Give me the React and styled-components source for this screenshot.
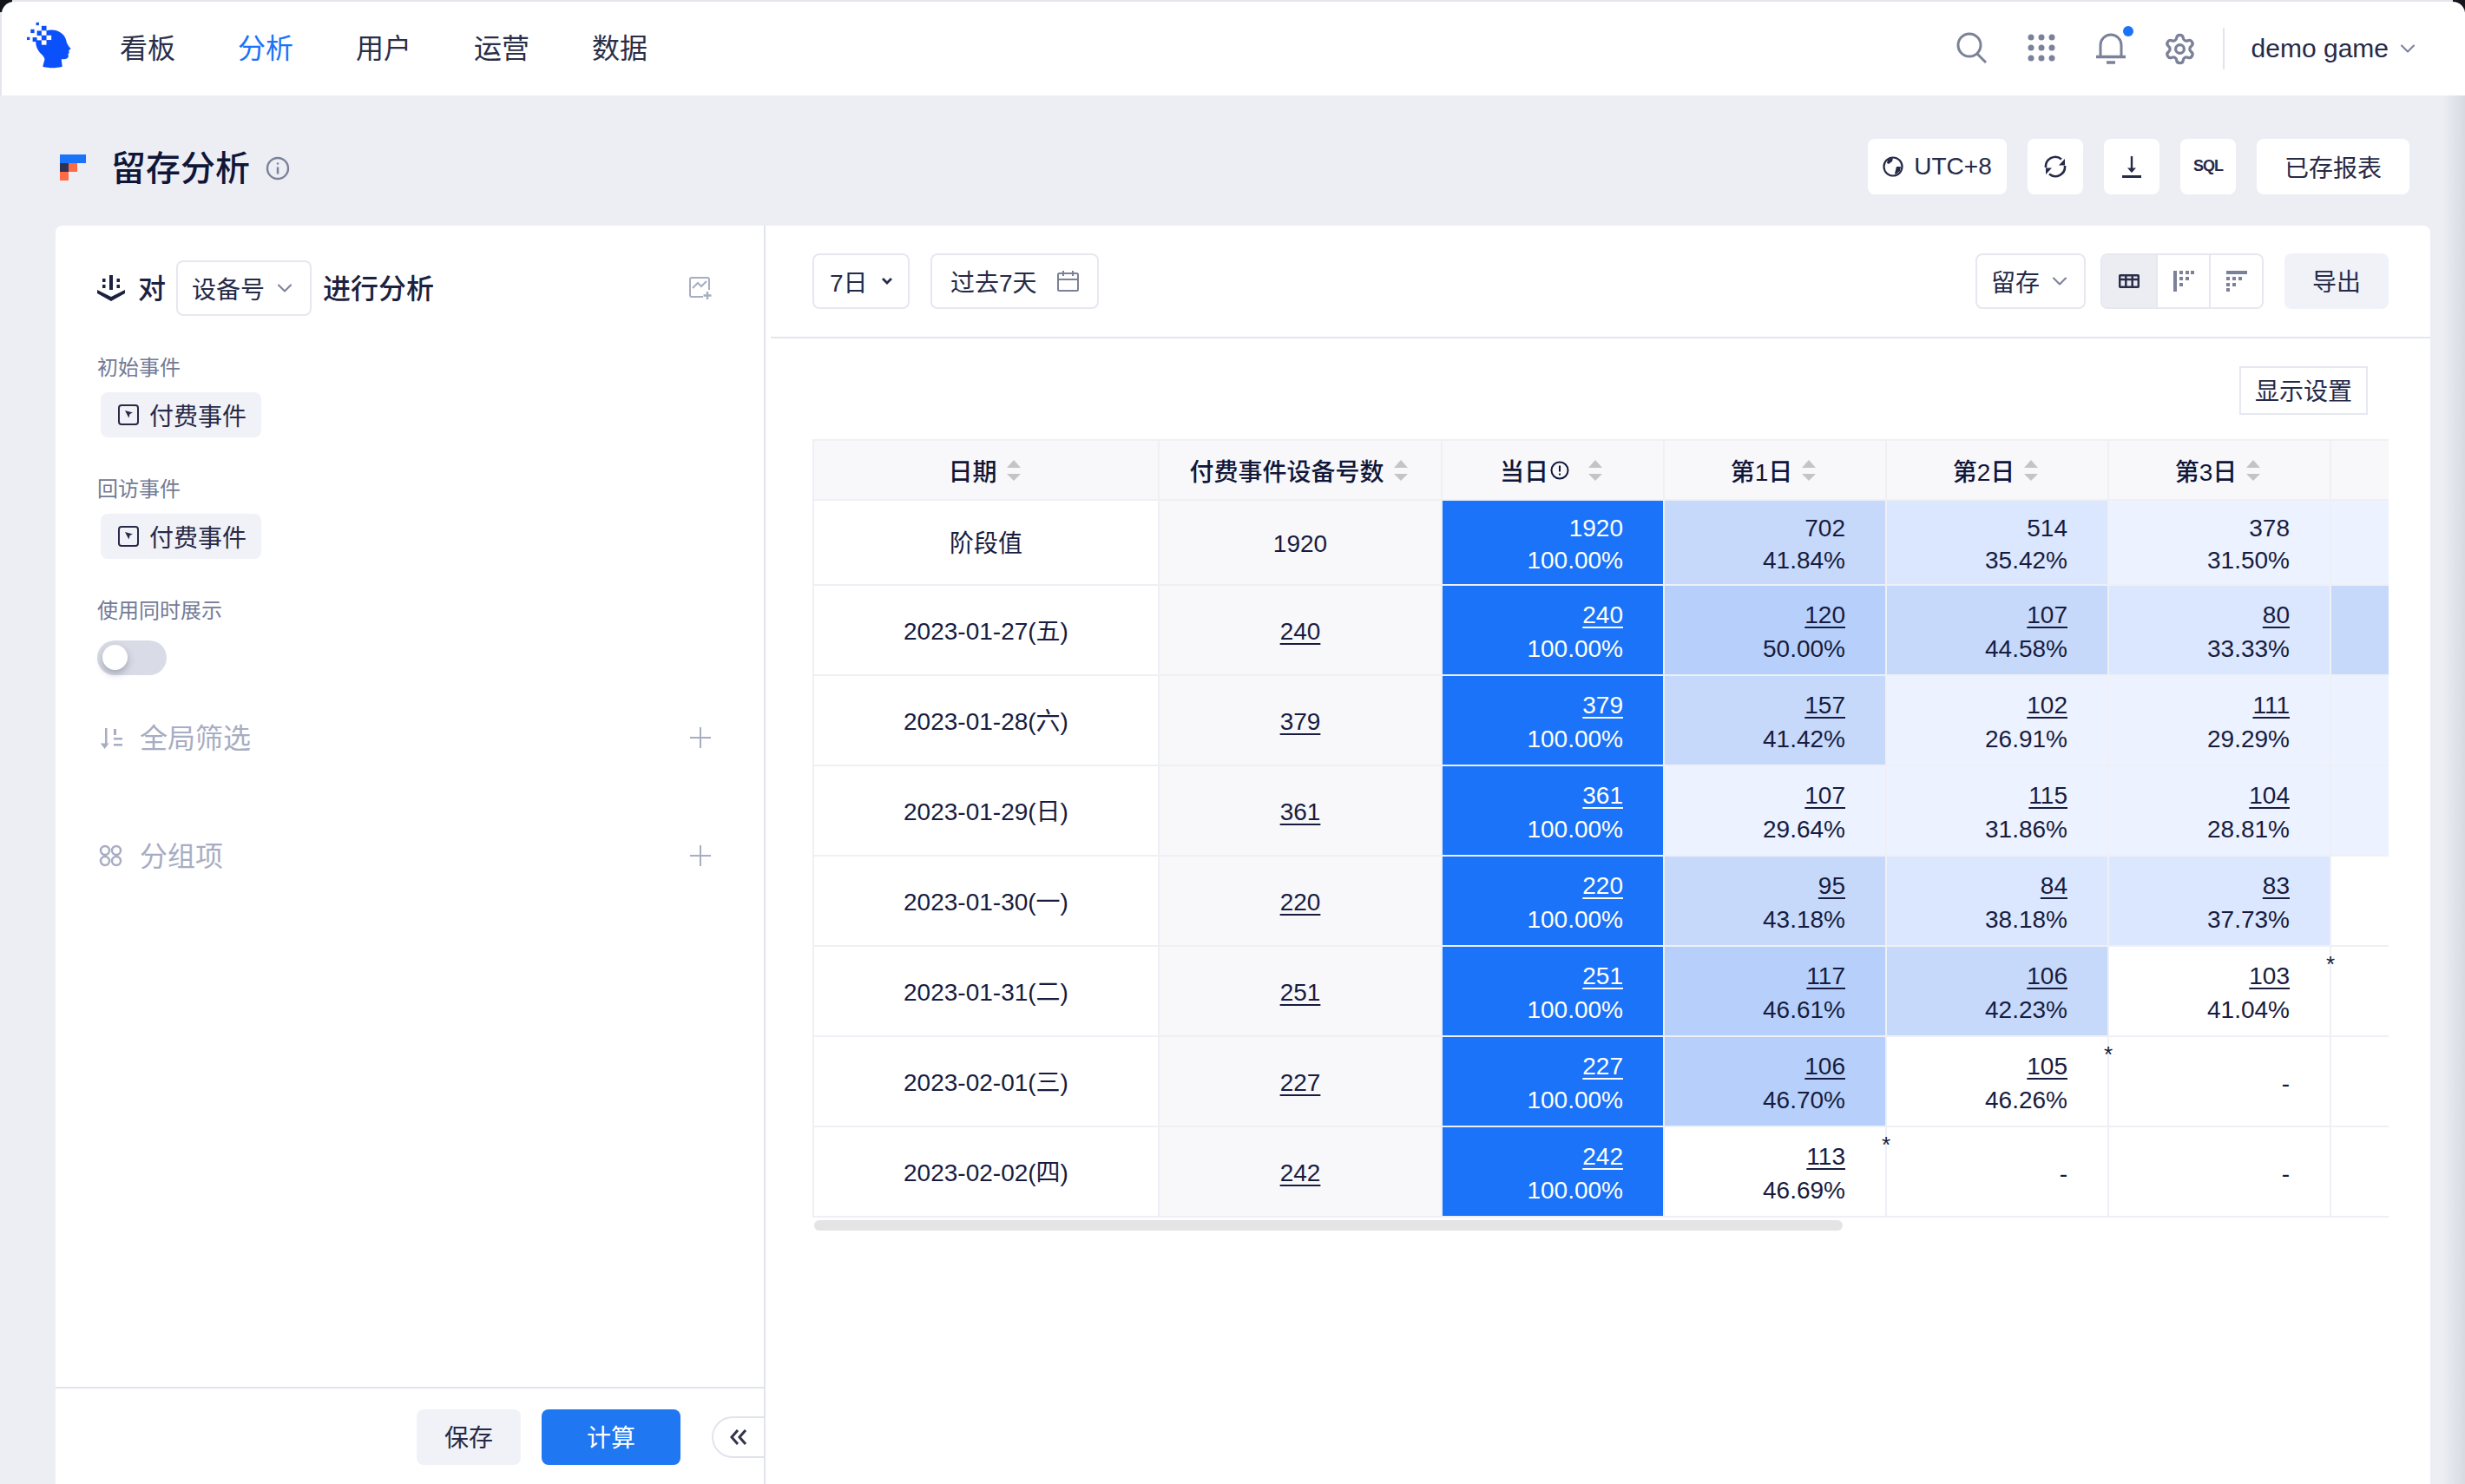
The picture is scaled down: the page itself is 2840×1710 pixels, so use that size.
import React from "react";
import styled, { createGlobalStyle } from "styled-components";
import { ChevronDown, Settings } from "lucide-react";

const HEAT = ["#ffffff", "#ecf2ff", "#dbe7fe", "#c6d9fb", "#b6d0fb"];

const summary = { date: "阶段值", total: "1920", first: ["1920", "100.00%"], cells: [["702", "41.84%", 3], ["514", "35.42%", 2], ["378", "31.50%", 1]], tail: 1 };

const rows = [
  { date: "2023-01-27(五)", total: "240", cells: [["120", "50.00%", 4], ["107", "44.58%", 3], ["80", "33.33%", 2]], tail: 3 },
  { date: "2023-01-28(六)", total: "379", cells: [["157", "41.42%", 3], ["102", "26.91%", 1], ["111", "29.29%", 1]], tail: 1 },
  { date: "2023-01-29(日)", total: "361", cells: [["107", "29.64%", 1], ["115", "31.86%", 1], ["104", "28.81%", 1]], tail: 1 },
  { date: "2023-01-30(一)", total: "220", cells: [["95", "43.18%", 3], ["84", "38.18%", 2], ["83", "37.73%", 2]], tail: 0 },
  { date: "2023-01-31(二)", total: "251", cells: [["117", "46.61%", 4], ["106", "42.23%", 3], ["103", "41.04%", 0, true]], tail: 0 },
  { date: "2023-02-01(三)", total: "227", cells: [["106", "46.70%", 4], ["105", "46.26%", 0, true], null], tail: 0 },
  { date: "2023-02-02(四)", total: "242", cells: [["113", "46.69%", 0, true], null, null], tail: 0 },
];

const GlobalStyle = createGlobalStyle`
  * { box-sizing: border-box; }
  html, body { margin: 0; padding: 0; }
  body {
    background: #eceef4;
    color: #171c3f;
    font-family: "Liberation Sans", "Noto Sans CJK SC", sans-serif;
    font-size: 28px;
  }
`;

const Page = styled.div`
  position: relative;
  width: 2840px;
  height: 1710px;
  overflow: hidden;
  background: #eceef4;

  &::after {
    content: "";
    position: absolute;
    top: 76px;
    right: 0;
    bottom: 0;
    width: 26px;
    background: linear-gradient(to right, rgba(20, 22, 40, 0), rgba(20, 22, 40, 0.09));
    -webkit-mask-image: linear-gradient(to bottom, transparent, black 34px);
    mask-image: linear-gradient(to bottom, transparent, black 34px);
    pointer-events: none;
  }
`;

const TopFrame = styled.div`
  position: relative;
  height: 110px;
  padding: 2px 0 0 2px;
  background: #e3e6eb;

  &::before, &::after {
    content: "";
    position: absolute;
    top: 0;
    width: 14px;
    height: 14px;
    background: #14141c;
  }
  &::before { left: 0; }
  &::after { right: 0; }
`;

const Header = styled.header`
  position: relative;
  z-index: 1;
  display: flex;
  align-items: center;
  height: 108px;
  padding: 0 52px 0 28px;
  background: #fff;
  border-radius: 14px 14px 0 0;
`;

const Logo = styled.svg`
  width: 53px;
  height: 55px;
  margin-top: -8px;
  flex: none;
`;

const Nav = styled.nav`
  display: flex;
  gap: 72px;
  margin-left: 55px;
`;

const NavItem = styled.a`
  font-size: 32px;
  line-height: 44px;
  color: ${(p) => (p.$active ? "#1a73f8" : "#2b2e48")};
`;

const HeaderRight = styled.div`
  display: flex;
  align-items: center;
  gap: 36px;
  margin-left: auto;
`;

const IconSlot = styled.div`
  display: flex;
  align-items: center;
  justify-content: center;
  width: 44px;
  height: 44px;
  color: #7b8198;

  svg { overflow: visible; }
`;

const VDivider = styled.div`
  width: 2px;
  height: 48px;
  margin-left: -9px;
  background: #e2e4ec;
`;

const GameSwitch = styled.div`
  display: flex;
  align-items: center;
  gap: 8px;
  margin-left: -5px;
  font-size: 30px;
  color: #262a47;
`;

const TitleRow = styled.div`
  display: flex;
  align-items: center;
  height: 150px;
  padding: 50px 64px 36px 69px;
`;

const PageIcon = styled.svg`
  width: 30px;
  height: 30px;
  margin-top: 2px;
  flex: none;
`;

const Title = styled.h1`
  margin: 4px 0 0 29px;
  font-size: 40px;
  line-height: 56px;
  font-weight: 500;
  color: #111638;
`;

const InfoIcon = styled.svg`
  width: 28px;
  height: 28px;
  margin: 4px 0 0 18px;
  flex: none;
`;

const TitleActions = styled.div`
  display: flex;
  gap: 24px;
  margin-left: auto;
`;

const ActionButton = styled.button`
  display: flex;
  align-items: center;
  justify-content: center;
  gap: 12px;
  width: ${(p) => p.$width || 64}px;
  height: 64px;
  padding: 0 0 1px;
  border: 0;
  border-radius: 8px;
  background: #fff;
  color: #262a47;
  font: inherit;
  font-size: 28px;
`;

const SqlMark = styled.span`
  font-size: 18px;
  font-weight: 700;
  letter-spacing: -1px;
`;

const MainPanel = styled.main`
  display: flex;
  width: 2736px;
  height: 1450px;
  margin-left: 64px;
  background: #fff;
  border-radius: 8px 8px 0 0;
`;

const LeftPane = styled.aside`
  display: flex;
  flex-direction: column;
  width: 818px;
  flex: none;
  border-right: 2px solid #e2e4ec;
`;

const LeftBody = styled.div`
  flex: 1;
  padding: 40px 60px 0 48px;
`;

const AnalysisRow = styled.div`
  display: flex;
  align-items: center;
  height: 64px;
  font-size: 32px;
  font-weight: 500;
  color: #1d2140;
`;

const Subject = styled.span`
  margin: -4px ${(p) => p.$right}px 0 ${(p) => p.$left}px;
`;

const SelectBox = styled.div`
  display: flex;
  align-items: center;
  justify-content: space-between;
  width: ${(p) => p.$width}px;
  height: 64px;
  padding: 0 ${(p) => p.$padRight || 12}px 0 ${(p) => p.$padLeft || 16}px;
  border: 2px solid #e6e8f0;
  border-radius: 8px;
  background: #fff;
  font-size: 28px;
  font-weight: 400;
  color: #262a47;
  flex: none;

  svg { flex: none; }
`;

const AddChart = styled.svg`
  width: 26px;
  height: 28px;
  margin-left: auto;
`;

const FieldLabel = styled.div`
  margin-top: 44px;
  font-size: 24px;
  line-height: 32px;
  color: #737a95;
`;

const EventTag = styled.div`
  display: flex;
  align-items: center;
  gap: 12px;
  width: 185px;
  height: 52px;
  margin: 12px 0 0 4px;
  padding: 0 0 1px 20px;
  border-radius: 8px;
  background: #f1f2f8;
  font-size: 28px;
  color: #262a47;
`;

const Toggle = styled.div`
  position: relative;
  width: 80px;
  height: 40px;
  margin-top: 18px;
  border-radius: 20px;
  background: #d9dce6;

  &::after {
    content: "";
    position: absolute;
    top: 5px;
    left: 6px;
    width: 29px;
    height: 29px;
    border-radius: 50%;
    background: #fff;
    box-shadow: 0 4px 8px rgba(30, 35, 60, 0.3);
  }
`;

const SectionRow = styled.div`
  display: flex;
  align-items: center;
  gap: 18px;
  height: 48px;
  margin-top: ${(p) => p.$top}px;
  font-size: 32px;
  color: #a7adc2;
`;

const SectionText = styled.span`
  margin-top: -4px;
`;

const SectionAdd = styled.svg`
  width: 26px;
  height: 26px;
  margin-left: auto;
`;

const LeftFooter = styled.div`
  position: relative;
  display: flex;
  justify-content: flex-end;
  gap: 24px;
  height: 112px;
  padding: 24px 96px 0 0;
  border-top: 2px solid #e2e4ec;
`;

const FooterButton = styled.button`
  width: ${(p) => p.$width}px;
  height: 64px;
  padding: 0 0 2px;
  border: 0;
  border-radius: 8px;
  background: ${(p) => (p.$primary ? "#2077f2" : "#f1f2f8")};
  color: ${(p) => (p.$primary ? "#fff" : "#262a47")};
  font: inherit;
  font-size: 28px;
`;

const CollapseTab = styled.div`
  position: absolute;
  top: 32px;
  right: 0;
  display: flex;
  align-items: center;
  justify-content: center;
  width: 60px;
  height: 48px;
  border: 2px solid #e2e4ec;
  border-right: 0;
  border-radius: 24px 0 0 24px;
  background: #fff;
`;

const RightPane = styled.section`
  flex: 1;
  min-width: 0;
`;

const Toolbar = styled.div`
  display: flex;
  align-items: flex-start;
  gap: 24px;
  height: 130px;
  margin-left: 6px;
  padding: 32px 48px 0 48px;
  border-bottom: 2px solid #e4e6ee;
`;

const RangeText = styled.span`
  white-space: nowrap;
`;

const ToolbarSpacer = styled.div`
  flex: 1;
`;

const Segments = styled.div`
  display: flex;
  height: 64px;
  margin-left: -7px;
  border: 2px solid #e6e8f0;
  border-radius: 8px;
  overflow: hidden;
`;

const Segment = styled.div`
  display: flex;
  align-items: center;
  justify-content: center;
  width: ${(p) => (p.$active ? 62 : 61)}px;
  background: ${(p) => (p.$active ? "#ecedf3" : "#fff")};

  & + & { border-left: 2px solid #e6e8f0; }
`;

const ExportButton = styled.button`
  width: 120px;
  height: 64px;
  padding: 0 0 2px;
  border: 0;
  border-radius: 8px;
  background: #f1f2f7;
  color: #262a47;
  font: inherit;
  font-size: 28px;
`;

const SettingsRow = styled.div`
  display: flex;
  justify-content: flex-end;
  margin: 32px 72px 0 0;
`;

const OutlineButton = styled.button`
  width: 148px;
  height: 56px;
  padding: 0 0 2px;
  border: 2px solid #e6e8f0;
  background: #fff;
  color: #262a47;
  font: inherit;
  font-size: 28px;
`;

const TableWrap = styled.div`
  width: 1816px;
  margin: 28px 0 0 54px;
  overflow: hidden;
`;

const Table = styled.table`
  width: 1993px;
  table-layout: fixed;
  border-collapse: separate;
  border-spacing: 0;
  border-left: 2px solid #eef0f5;
`;

const Th = styled.th`
  height: 71px;
  padding: 0 4px 0 0;
  border-top: 2px solid #eef0f5;
  border-right: 2px solid #eef0f5;
  border-bottom: 2px solid #eef0f5;
  background: #f8f8fb;
  font-weight: 500;
  color: #111638;
`;

const HeadInner = styled.div`
  display: flex;
  align-items: center;
  justify-content: center;
  gap: ${(p) => p.$gap || 11}px;
`;

const HeadLabel = styled.span`
  display: inline-flex;
  align-items: center;
  gap: 2px;
  white-space: nowrap;
`;

const Tr = styled.tr`
  height: ${(p) => p.$height}px;
`;

const Td = styled.td`
  position: relative;
  padding: ${(p) => (p.$center ? 2 : 4)}px ${(p) => (p.$center ? 0 : 46)}px 0 0;
  border-right: 2px solid #eef0f5;
  border-bottom: 2px solid #eef0f5;
  background: ${(p) => p.$bg};
  color: ${(p) => p.$color || "#171c3f"};
  text-align: ${(p) => (p.$center ? "center" : "right")};
  line-height: 37px;
  white-space: nowrap;
`;

const CountLink = styled.a`
  display: inline-block;
  color: inherit;
  text-decoration: underline;
  text-decoration-thickness: 2px;
  text-underline-offset: 4px;
`;

const CountLine = styled.div`
  margin-bottom: ${(p) => (p.$link ? 2 : 0)}px;
`;

const Star = styled.span`
  position: absolute;
  top: 7px;
  right: -6px;
  z-index: 1;
  font-size: 26px;
  line-height: 26px;
`;

const ScrollThumb = styled.div`
  width: 1185px;
  height: 12px;
  margin: 3px 0 0 56px;
  border-radius: 6px;
  background: #e4e4e4;
`;

const SortIcon = () => (
  <svg width="16" height="24" viewBox="0 0 16 24" fill="#c4c4c4">
    <path d="M8 0l8 9H0z" />
    <path d="M0 16h16l-8 8z" />
  </svg>
);

const ValueCell = ({ cell, link }) => {
  if (!cell) return <Td $bg="#fff">-</Td>;
  const [count, pct, level, star] = cell;
  return (
    <Td $bg={HEAT[level]}>
      <CountLine $link={link}>{link ? <CountLink>{count}</CountLink> : count}</CountLine>
      <div>{pct}</div>
      {star && <Star>*</Star>}
    </Td>
  );
};

const TagIcon = () => (
  <svg width="24" height="24" viewBox="0 0 24 24" fill="none">
    <rect x="1" y="1" width="22" height="22" rx="3" stroke="#262a47" strokeWidth="2" />
    <path d="M8 7l9 2.5-3.4 1.6-1.2 4.4z" fill="#262a47" />
  </svg>
);

export default function App() {
  return (
    <Page>
      <GlobalStyle />
      <TopFrame>
        <Header>
          <Logo viewBox="90 85 160 165">
            <path
              fill="#0a50fb"
              d="M124 152c4-22 28-40 56-39 26 1 46 16 50 38 1 8 5 14 10 21l6 6-7 6 1 9-4 4 2 8-5 7c-6 4-14 3-20 3l3 26c-22 6-46 6-68 0l7-26c-2-10-10-16-18-24-9-11-14-24-13-39z"
            />
            <rect x="125" y="87" width="10" height="10" fill="#0a50fb" />
            <rect x="106" y="111" width="13" height="13" fill="#0a50fb" />
            <rect x="93" y="138" width="10" height="10" fill="#0a50fb" />
            <rect x="144" y="99" width="17" height="17" fill="#0a50fb" />
            <rect x="128" y="116" width="17" height="17" fill="#0a50fb" />
            <rect x="113" y="139" width="16" height="15" fill="#0a50fb" />
            <rect x="144" y="116" width="17" height="16" fill="#fff" />
            <rect x="128" y="133" width="16" height="16" fill="#fff" />
            <rect x="161" y="132" width="17" height="16" fill="#fff" />
            <rect x="144" y="149" width="17" height="16" fill="#fff" />
          </Logo>
          <Nav>
            <NavItem>看板</NavItem>
            <NavItem $active>分析</NavItem>
            <NavItem>用户</NavItem>
            <NavItem>运营</NavItem>
            <NavItem>数据</NavItem>
          </Nav>
          <HeaderRight>
            <IconSlot>
              <svg width="44" height="44" viewBox="0 0 44 44" fill="none" stroke="currentColor" strokeWidth="3">
                <circle cx="19" cy="18" r="13" />
                <path d="M28 28l10 10" />
              </svg>
            </IconSlot>
            <IconSlot>
              <svg width="44" height="44" viewBox="0 0 44 44" fill="currentColor">
                {[10, 22, 34].map((x) =>
                  [9, 21, 33].map((y) => <circle key={`${x}-${y}`} cx={x} cy={y} r="3.5" />)
                )}
              </svg>
            </IconSlot>
            <IconSlot>
              <svg width="44" height="44" viewBox="0 0 44 44" fill="none" stroke="currentColor" strokeWidth="3">
                <path d="M10 31V18a12 12 0 0 1 24 0v13" />
                <path d="M5 31.5h34" strokeWidth="3.5" />
                <path d="M17 38h10" strokeWidth="3.5" />
                <circle cx="42" cy="2" r="6" fill="#1a73f8" stroke="none" />
              </svg>
            </IconSlot>
            <IconSlot>
              <Settings size={39} strokeWidth={2} />
            </IconSlot>
            <VDivider />
            <GameSwitch>
              demo game
              <ChevronDown size={28} color="#7b8198" strokeWidth={1.8} />
            </GameSwitch>
          </HeaderRight>
        </Header>
      </TopFrame>

      <TitleRow>
        <PageIcon viewBox="0 0 30 30">
          <rect width="30" height="10" fill="#1a73f8" />
          <rect y="10" width="10" height="10" fill="#2f3253" />
          <rect x="10" y="10" width="10" height="10" fill="#ff6b45" />
          <rect y="20" width="10" height="10" fill="#ff6b45" />
        </PageIcon>
        <Title>留存分析</Title>
        <InfoIcon viewBox="0 0 28 28" fill="none" stroke="#7b8198" strokeWidth="2.4">
          <circle cx="14" cy="14" r="12" />
          <path d="M14 12.5v8" />
          <circle cx="14" cy="8.5" r="1.2" fill="#7b8198" stroke="none" />
        </InfoIcon>
        <TitleActions>
          <ActionButton $width={160}>
            <svg width="24" height="24" viewBox="0 0 24 24" fill="#262a47">
              <circle cx="12" cy="12" r="10.5" fill="none" stroke="#262a47" strokeWidth="2.2" />
              <path d="M6 4l6-2-1 4-4 3-2-1zM16 12l5 0-1 5-5 4-1-1 1-4z" />
            </svg>
            UTC+8
          </ActionButton>
          <ActionButton>
            <svg width="28" height="28" viewBox="0 0 28 28" fill="none" stroke="#262a47" strokeWidth="2.6">
              <path d="M3 15A11 11 0 0 1 21 5.5" />
              <path d="M25 13A11 11 0 0 1 7 22.5" />
              <path d="M25 5v7.5h-7z" fill="#262a47" stroke="none" />
              <path d="M3 23v-7.500h7z" fill="#262a47" stroke="none" />
            </svg>
          </ActionButton>
          <ActionButton>
            <svg width="24" height="26" viewBox="0 0 24 26" fill="none" stroke="#262a47" strokeWidth="2.4">
              <path d="M12 1v18" />
              <path d="M7 14.500h10L12 20z" fill="#262a47" stroke="none" />
              <path d="M1 24.500h22" strokeWidth="3" />
            </svg>
          </ActionButton>
          <ActionButton>
            <SqlMark>SQL</SqlMark>
          </ActionButton>
          <ActionButton $width={176}>已存报表</ActionButton>
        </TitleActions>
      </TitleRow>

      <MainPanel>
        <LeftPane>
          <LeftBody>
            <AnalysisRow>
              <svg width="32" height="30" viewBox="0 0 32 30" fill="#1d2140">
                <rect x="14" y="0" width="4" height="17" />
                <rect x="6" y="4" width="3.500" height="4" />
                <rect x="6" y="11" width="3.500" height="4" />
                <rect x="22.500" y="4" width="3.500" height="4" />
                <rect x="22.500" y="11" width="3.500" height="4" />
                <path d="M0 17l16 8 16-8v4l-16 9-16-9z" />
              </svg>
              <Subject $left={15} $right={12}>对</Subject>
              <SelectBox $width={156} $padRight={15}>
                设备号
                <ChevronDown size={28} color="#7b8198" strokeWidth={1.8} />
              </SelectBox>
              <Subject $left={13} $right={0}>进行分析</Subject>
              <AddChart viewBox="0 0 26 28" fill="none" stroke="#a7adc2" strokeWidth="2">
                <path d="M16 24H3a2 2 0 0 1-2-2V4a2 2 0 0 1 2-2h18a2 2 0 0 1 2 2v12" />
                <path d="M4 14l6-6 4 4 6-6" />
                <path d="M21 18v9M16.500 22.500h9" strokeWidth="2.4" />
              </AddChart>
            </AnalysisRow>

            <FieldLabel>初始事件</FieldLabel>
            <EventTag>
              <TagIcon />
              付费事件
            </EventTag>
            <FieldLabel>回访事件</FieldLabel>
            <EventTag>
              <TagIcon />
              付费事件
            </EventTag>
            <FieldLabel>使用同时展示</FieldLabel>
            <Toggle />

            <SectionRow $top={48}>
              <svg width="31" height="26" viewBox="0 0 31 26" fill="#a7adc2">
                <rect x="9" y="2" width="2.500" height="20" />
                <path d="M4 16h13l-6.500 9z" transform="translate(0 0) scale(.75 .7) translate(1 12)" />
                <rect x="19" y="3" width="3" height="7" />
                <rect x="19" y="13" width="10" height="2.500" />
                <rect x="19" y="20" width="10" height="2.500" />
              </svg>
              <SectionText>全局筛选</SectionText>
              <SectionAdd viewBox="0 0 26 26" stroke="#a7adc2" strokeWidth="2">
                <path d="M13 1v24M1 13h24" />
              </SectionAdd>
            </SectionRow>
            <SectionRow $top={88}>
              <svg width="31" height="26" viewBox="0 0 31 26" fill="none" stroke="#a7adc2" strokeWidth="2.500">
                <circle cx="9" cy="7" r="5" />
                <circle cx="22" cy="7" r="5" />
                <circle cx="9" cy="19" r="5" />
                <circle cx="22" cy="19" r="5" />
              </svg>
              <SectionText>分组项</SectionText>
              <SectionAdd viewBox="0 0 26 26" stroke="#a7adc2" strokeWidth="2">
                <path d="M13 1v24M1 13h24" />
              </SectionAdd>
            </SectionRow>
          </LeftBody>
          <LeftFooter>
            <FooterButton $width={120}>保存</FooterButton>
            <FooterButton $width={160} $primary>计算</FooterButton>
            <CollapseTab>
              <svg width="20" height="18" viewBox="0 0 20 18" fill="none" stroke="#33354a" strokeWidth="3">
                <path d="M9 1L2 9l7 8" />
                <path d="M18 1l-7 8 7 8" />
              </svg>
            </CollapseTab>
          </LeftFooter>
        </LeftPane>

        <RightPane>
          <Toolbar>
            <SelectBox $width={112} $padLeft={18} $padRight={18}>
              7日
              <svg width="12" height="8" viewBox="0 0 12 8" fill="none" stroke="#262a47" strokeWidth="2.8">
                <path d="M1 1l5 5 5-5" />
              </svg>
            </SelectBox>
            <SelectBox $width={194} $padLeft={21} $padRight={21}>
              <RangeText>过去7天</RangeText>
              <svg width="25" height="24" viewBox="0 0 25 24" fill="none" stroke="#7b8198" strokeWidth="2">
                <rect x="1" y="3" width="23" height="20" rx="1.500" />
                <path d="M1 10h23M7 0v6M18 0v6" />
              </svg>
            </SelectBox>
            <ToolbarSpacer />
            <SelectBox $width={127} $padLeft={16} $padRight={14}>
              留存
              <ChevronDown size={28} color="#7b8198" strokeWidth={1.8} />
            </SelectBox>
            <Segments>
              <Segment $active>
                <svg width="24" height="16" viewBox="0 0 24 16" fill="none" stroke="#2b2e48" strokeWidth="2.500">
                  <rect x="1.200" y="1.200" width="21.600" height="13.600" rx="1" />
                  <path d="M1 6h22M8.300 2v12M15.700 2v12" />
                </svg>
              </Segment>
              <Segment>
                <svg width="24" height="24" viewBox="0 0 24 24" fill="#7b8198">
                  <rect x="0" y="0" width="4" height="24" />
                  <rect x="7" y="0" width="4" height="4" />
                  <rect x="14" y="0" width="4" height="4" />
                  <rect x="20" y="0" width="4" height="4" />
                  <rect x="7" y="7" width="4" height="4" />
                  <rect x="14" y="7" width="4" height="4" />
                  <rect x="7" y="14" width="4" height="4" />
                </svg>
              </Segment>
              <Segment>
                <svg width="24" height="24" viewBox="0 0 24 24" fill="#7b8198">
                  <rect x="0" y="0" width="24" height="4" />
                  <rect x="0" y="7" width="4" height="4" />
                  <rect x="7" y="7" width="4" height="4" />
                  <rect x="14" y="7" width="4" height="4" />
                  <rect x="0" y="14" width="4" height="4" />
                  <rect x="7" y="14" width="4" height="4" />
                  <rect x="0" y="20" width="4" height="4" />
                </svg>
              </Segment>
            </Segments>
            <ExportButton>导出</ExportButton>
          </Toolbar>

          <SettingsRow>
            <OutlineButton>显示设置</OutlineButton>
          </SettingsRow>

          <TableWrap>
            <Table>
              <colgroup>
                <col width="398" />
                <col width="326" />
                <col width="256" />
                <col width="256" />
                <col width="256" />
                <col width="256" />
                <col width="243" />
              </colgroup>
              <thead>
                <tr>
                  <Th><HeadInner><HeadLabel>日期</HeadLabel><SortIcon /></HeadInner></Th>
                  <Th><HeadInner><HeadLabel>付费事件设备号数</HeadLabel><SortIcon /></HeadInner></Th>
                  <Th>
                    <HeadInner $gap={22}>
                      <HeadLabel>
                        当日
                        <svg width="22" height="22" viewBox="0 0 22 22" fill="none" stroke="#111638" strokeWidth="2">
                          <circle cx="11" cy="11" r="9.500" />
                          <path d="M11 5.500v7M11 14.500v2" />
                        </svg>
                      </HeadLabel>
                      <SortIcon />
                    </HeadInner>
                  </Th>
                  {["第1日", "第2日", "第3日"].map((d) => (
                    <Th key={d}><HeadInner><HeadLabel>{d}</HeadLabel><SortIcon /></HeadInner></Th>
                  ))}
                  <Th />
                </tr>
              </thead>
              <tbody>
                <Tr $height={98}>
                  <Td $center $bg="#fff">{summary.date}</Td>
                  <Td $center $bg="#f8f8fb">{summary.total}</Td>
                  <Td $bg="#1a73f8" $color="#fff">
                    <div>{summary.first[0]}</div>
                    <div>{summary.first[1]}</div>
                  </Td>
                  {summary.cells.map((c) => <ValueCell key={c[0]} cell={c} />)}
                  <Td $bg={HEAT[summary.tail]} />
                </Tr>
                {rows.map((r) => (
                  <Tr key={r.date} $height={104}>
                    <Td $center $bg="#fff">{r.date}</Td>
                    <Td $center $bg="#f8f8fb"><CountLink>{r.total}</CountLink></Td>
                    <Td $bg="#1a73f8" $color="#fff">
                      <CountLine $link><CountLink>{r.total}</CountLink></CountLine>
                      <div>100.00%</div>
                    </Td>
                    {r.cells.map((c, i) => <ValueCell key={i} cell={c} link />)}
                    <Td $bg={HEAT[r.tail]} />
                  </Tr>
                ))}
              </tbody>
            </Table>
          </TableWrap>
          <ScrollThumb />
        </RightPane>
      </MainPanel>
    </Page>
  );
}
